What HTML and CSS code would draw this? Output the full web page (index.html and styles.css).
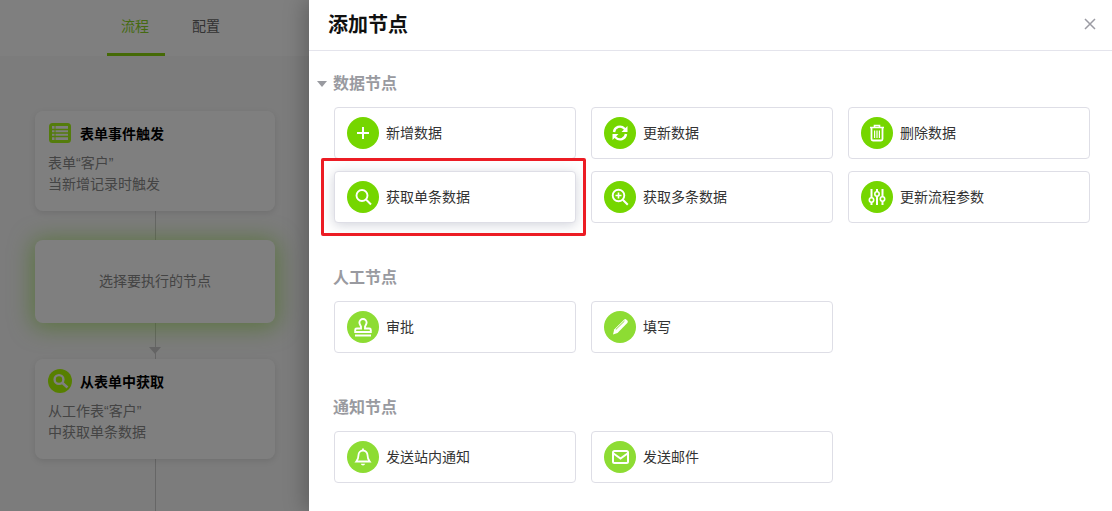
FILE: index.html
```html
<!DOCTYPE html>
<html lang="zh-CN">
<head>
    <meta charset="UTF-8">
    <meta name="viewport" content="width=device-width, initial-scale=1.0">
    <title>添加节点</title>
    <link rel="stylesheet" href="styles.css">
</head>
<body>

    <div class="flow">
        <div class="tabs">
            <div class="tab active">流程</div>
            <div class="tab">配置</div>
        </div>

        <div class="flow-body">
            <div class="flow-card">
                <div class="flow-title">
                    <svg class="flow-icon" viewBox="0 0 24 22">
                        <rect x="1" y="1" width="22" height="20" rx="3.500" fill="#a8f818"/>
                        <rect x="4" y="4" width="16" height="14" fill="#fff"/>
                        <path d="M4 7.500h16M4 11h16M4 14.500h16" stroke="#a8f818" stroke-width="1.600"/>
                        <path d="M7 4v14" stroke="#a8f818" stroke-width="1"/>
                    </svg>
                    <span>表单事件触发</span>
                </div>
                <p>表单“客户”<br>当新增记录时触发</p>
            </div>

            <div class="flow-card pending">选择要执行的节点</div>
            <div class="arrow"></div>

            <div class="flow-card">
                <div class="flow-title">
                    <svg class="flow-icon round" viewBox="0 0 24 24">
                        <circle cx="12" cy="12" r="12" fill="#aeff00"/>
                        <circle cx="11" cy="10.500" r="4.400" fill="none" stroke="#fff" stroke-width="2.400"/>
                        <path d="M14.500 14l5 4.500" stroke="#fff" stroke-width="2.600"/>
                    </svg>
                    <span>从表单中获取</span>
                </div>
                <p>从工作表“客户”<br>中获取单条数据</p>
            </div>
        </div>
        <div class="overlay"></div>
    </div>

    <div class="drawer">
        <header class="drawer-head">
            <h1>添加节点</h1>
            <svg class="close" viewBox="0 0 12 12"><path d="M1 1l10 10M11 1L1 11" stroke="#9b9ba3" stroke-width="1.500"/></svg>
        </header>

        <div class="drawer-body">
            <section>
                <h2><i class="caret"></i>数据节点</h2>
                <div class="nodes">
                    <div class="node">
                        <svg class="ico" viewBox="0 0 32 32"><circle cx="16" cy="16" r="16"/><path d="M16 10v12M10 16h12" class="w" stroke-width="2"/></svg>
                        新增数据
                    </div>
                    <div class="node">
                        <svg class="ico" viewBox="0 0 32 32"><circle cx="16" cy="16" r="16"/><path d="M10 15a6 6 0 0 1 10.300-3.500l1.300 1.300" class="w" stroke-width="2.400"/><path d="M23.500 9v6h-6z" fill="#fff"/><path d="M22 17a6 6 0 0 1-10.300 3.500l-1.300-1.300" class="w" stroke-width="2.400"/><path d="M8.500 23v-6h6z" fill="#fff"/></svg>
                        更新数据
                    </div>
                    <div class="node">
                        <svg class="ico" viewBox="0 0 32 32"><circle cx="16" cy="16" r="16"/><path d="M9 10.500h14M13.500 10V8.500h5V10" class="w" stroke-width="1.600"/><path d="M10.500 11v11a1.500 1.500 0 0 0 1.500 1.500h8a1.500 1.500 0 0 0 1.500-1.500V11" class="w" stroke-width="1.800"/><path d="M13.600 13.500v7.500M16 13.500v7.500M18.400 13.500v7.500" class="w" stroke-width="1.200"/></svg>
                        删除数据
                    </div>
                    <div class="node hover">
                        <svg class="ico" viewBox="0 0 32 32"><circle cx="16" cy="16" r="16"/><circle cx="15" cy="14.500" r="5.500" class="w" stroke-width="1.900"/><path d="M19 18.500l5 5" class="w" stroke-width="2"/></svg>
                        获取单条数据
                    </div>
                    <div class="node">
                        <svg class="ico" viewBox="0 0 32 32"><circle cx="16" cy="16" r="16"/><circle cx="14.500" cy="14.500" r="5.800" class="w" stroke-width="1.900"/><path d="M18.800 18.800l5 5" class="w" stroke-width="2"/><path d="M14.500 11.500v6M11.500 14.500h6" class="w" stroke-width="1.600"/></svg>
                        获取多条数据
                    </div>
                    <div class="node">
                        <svg class="ico" viewBox="0 0 32 32"><circle cx="16" cy="16" r="16"/><path d="M10.500 8v16M16 8v16M21.500 8v16" class="w" stroke-width="2"/><circle cx="10.500" cy="19" r="2.200" class="g" stroke-width="1.600"/><circle cx="16" cy="13" r="2.200" class="g" stroke-width="1.600"/><circle cx="21.500" cy="18" r="2.200" class="g" stroke-width="1.600"/></svg>
                        更新流程参数
                    </div>
                </div>
            </section>

            <section class="light">
                <h2>人工节点</h2>
                <div class="nodes">
                    <div class="node">
                        <svg class="ico" viewBox="0 0 32 32"><circle cx="16" cy="16" r="16"/><path d="M14 17c.6-2-1.600-3-1.600-5.400a3.600 3.600 0 0 1 7.200 0c0 2.400-2.200 3.400-1.600 5.400v.5h4.300a1.500 1.500 0 0 1 1.500 1.500v2H8.200v-2a1.500 1.500 0 0 1 1.500-1.500H14z" class="w" stroke-width="1.900"/><path d="M8 24.500h16" class="w" stroke-width="2"/></svg>
                        审批
                    </div>
                    <div class="node">
                        <svg class="ico" viewBox="0 0 32 32"><circle cx="16" cy="16" r="16"/><path d="M9 23.500l1.200-5L20 8.700a1.800 1.800 0 0 1 2.500 0l.8.800a1.800 1.800 0 0 1 0 2.500L13.500 22z" fill="#fff"/><path d="M11.800 18.500L20.500 10" stroke="#8ddc33" stroke-width="1"/></svg>
                        填写
                    </div>
                </div>
            </section>

            <section class="light">
                <h2>通知节点</h2>
                <div class="nodes">
                    <div class="node">
                        <svg class="ico" viewBox="0 0 32 32"><circle cx="16" cy="16" r="16"/><path d="M16 9.500a4.500 4.500 0 0 0-4.500 4.500c0 3.500-1 5-2.200 6.500h13.400c-1.200-1.500-2.200-3-2.200-6.500A4.500 4.500 0 0 0 16 9.500z" class="w" stroke-width="1.800"/><path d="M16 7.500v2" class="w" stroke-width="1.800"/><path d="M13.800 22.800a2.300 2.300 0 0 0 4.400 0z" fill="#fff"/></svg>
                        发送站内通知
                    </div>
                    <div class="node">
                        <svg class="ico" viewBox="0 0 32 32"><circle cx="16" cy="16" r="16"/><rect x="9" y="10" width="15" height="12" rx="1.500" class="w" stroke-width="2"/><path d="M9.500 12.500l7 5 7-5" class="w" stroke-width="2"/></svg>
                        发送邮件
                    </div>
                </div>
            </section>
        </div>

        <div class="callout"></div>
    </div>

</body>
</html>
```

FILE: styles.css
```css
* {
    box-sizing: border-box;
}

html, body {
    height: 100%;
}

body {
    margin: 0;
    display: flex;
    height: 511px;
    overflow: hidden;
    font-family: "Liberation Sans", "Noto Sans CJK SC", sans-serif;
    color: #333;
    background-color: #fff;
}

/* flow editor behind the drawer */
.flow {
    position: relative;
    width: 309px;
    height: 511px;
    flex: none;
    overflow: hidden;
    background-color: #f8f8f8;
}

.overlay {
    position: absolute;
    top: 0;
    left: 0;
    right: 0;
    bottom: 0;
    background-color: rgba(0, 0, 0, 0.5);
}

.tabs {
    display: flex;
    gap: 13px;
    height: 56px;
    padding-left: 107px;
    background-color: #fff;
}

.tab {
    height: 56px;
    padding: 0 16px 0 14px;
    line-height: 52px;
    font-size: 14px;
    color: #666;
}

.tab.active {
    color: #8bd524;
    border-bottom: 3px solid #8ad40c;
}

.flow-body {
    position: relative;
    display: flex;
    flex-direction: column;
    padding: 55px 0 0 35px;
}

.flow-body::before {
    content: "";
    position: absolute;
    top: 100px;
    bottom: -100px;
    left: 155px;
    width: 1px;
    background-color: #ccc;
}

.flow-card {
    position: relative;
    width: 240px;
    height: 100px;
    padding: 10px 13px;
    border-radius: 8px;
    background-color: #fff;
    box-shadow: 0 2px 6px rgba(0, 0, 0, 0.1);
    font-size: 14px;
    color: #888;
}

.flow-card p {
    margin: 0;
    line-height: 21px;
}

.flow-card.pending {
    height: 83px;
    margin-top: 29px;
    padding-bottom: 14px;
    display: flex;
    align-items: center;
    justify-content: center;
    box-shadow: 0 2px 22px 3px rgba(133, 220, 40, 0.55);
}

.flow-title {
    display: flex;
    align-items: center;
    gap: 8px;
    height: 24px;
    margin-bottom: 8px;
    font-size: 14px;
    font-weight: bold;
    color: #000;
}

.flow-icon {
    width: 24px;
    height: 24px;
    flex: none;
}

.arrow {
    position: relative;
    align-self: flex-start;
    width: 0;
    height: 0;
    margin: 24px 0 5px 114px;
    border-left: 6px solid transparent;
    border-right: 6px solid transparent;
    border-top: 7px solid #c8c8c8;
}

/* drawer */
.drawer {
    position: relative;
    flex: 1;
    height: 511px;
    background-color: #fff;
    box-shadow: -4px 0 20px rgba(0, 0, 0, 0.25);
}

.drawer-head {
    display: flex;
    align-items: center;
    justify-content: space-between;
    height: 51px;
    padding: 0 16px 3px 19px;
    border-bottom: 1px solid #e4e4ec;
}

.drawer-head h1 {
    margin: 0;
    font-size: 20px;
    font-weight: bold;
    color: #111;
}

.close {
    width: 12px;
    height: 12px;
}

.drawer-body {
    padding: 20px 0 0 25px;
}

section + section {
    margin-top: 42px;
}

h2 {
    position: relative;
    margin: 0 0 12px -1px;
    height: 24px;
    line-height: 26px;
    font-size: 16px;
    font-weight: bold;
    color: #999aa0;
}

.caret {
    position: absolute;
    left: -16px;
    top: 10px;
    border-left: 5px solid transparent;
    border-right: 5px solid transparent;
    border-top: 6px solid #999aa0;
}

.nodes {
    display: grid;
    grid-template-columns: repeat(3, 242px);
    column-gap: 15px;
    row-gap: 12px;
}

.node {
    display: flex;
    align-items: center;
    gap: 7px;
    height: 52px;
    padding-left: 12px;
    padding-bottom: 2px;
    border: 1px solid #dedee6;
    border-radius: 4px;
    background-color: #fff;
    font-size: 14px;
    font-weight: 400;
    color: #333;
}

.node.hover {
    box-shadow: 0 2px 12px rgba(70, 80, 110, 0.25);
}

.ico {
    width: 32px;
    height: 32px;
    flex: none;
    margin-bottom: -2px;
    fill: #75d600;
}

.light .ico {
    fill: #8ddc33;
}

.ico .w {
    fill: none;
    stroke: #fff;
}

.ico .g {
    fill: #75d600;
    stroke: #fff;
}

/* red annotation box around the highlighted node */
.callout {
    position: absolute;
    left: 12px;
    top: 158px;
    width: 265px;
    height: 78px;
    border: 3px solid #ec1c24;
    border-radius: 2px;
}
```
